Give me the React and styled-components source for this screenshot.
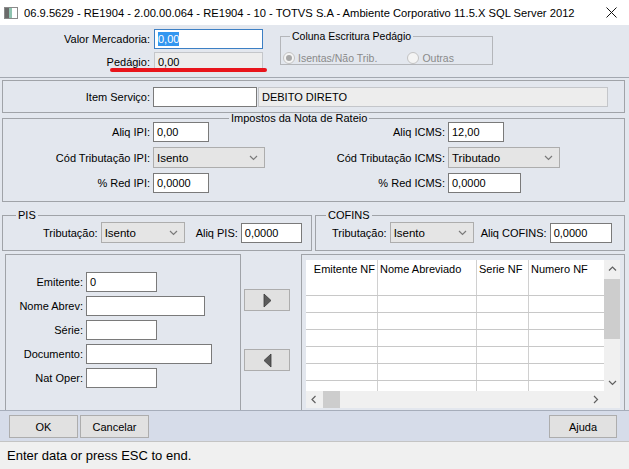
import styled, { createGlobalStyle } from "styled-components";

const GlobalStyle = createGlobalStyle`
  html, body { margin: 0; padding: 0; }
  body {
    width: 629px;
    height: 469px;
    overflow: hidden;
    font-family: "Liberation Sans", Arial, sans-serif;
    font-size: 11px;
    color: #000;
  }
  * { box-sizing: border-box; }
`;

const Window = styled.div`
  width: 629px;
  height: 469px;
  display: flex;
  flex-direction: column;
  background: #e3e7ee;
`;

const TitleBar = styled.div`
  height: 25px;
  flex: none;
  background: #fff;
  display: flex;
  align-items: center;
  gap: 6px;
  padding: 0 12px 0 4px;
  font-size: 11.2px;
`;

const TitleText = styled.div`
  flex: 1;
  white-space: nowrap;
  overflow: hidden;
`;

const TopPanel = styled.div`
  position: relative;
  height: 53px;
  flex: none;
  display: flex;
  align-items: flex-start;
  padding-top: 4px;
  border-bottom: 1px solid #a3a8b0;
`;

const Stack = styled.div`
  display: flex;
  flex-direction: column;
  gap: ${(p) => p.$gap || 3}px;
`;

const Row = styled.div`
  display: flex;
  align-items: center;
  gap: ${(p) => (p.$gap === undefined ? 3 : p.$gap)}px;
  padding-left: ${(p) => p.$pl || 0}px;
  margin-top: ${(p) => p.$mt || 0}px;
`;

const Label = styled.div`
  width: ${(p) => (p.$w ? `${p.$w}px` : "auto")};
  flex: none;
  text-align: right;
  white-space: nowrap;
  margin-left: ${(p) => p.$ml || 0}px;
`;

const Field = styled.div`
  width: ${(p) => p.$w}px;
  height: 20px;
  flex: none;
  display: flex;
  align-items: center;
  padding-left: 3px;
  white-space: nowrap;
  background: ${(p) => (p.$disabled ? "#ededed" : "#fff")};
  border: 1px solid
    ${(p) => (p.$focus ? "#3c7fc4" : p.$disabled ? "#c4c6ca" : "#7a7a7a")};
  margin-left: ${(p) => p.$ml || 0}px;
`;

const Selected = styled.span`
  background: #3296f0;
  color: #fff;
  line-height: 14px;
`;

const RedMark = styled.div`
  position: absolute;
  left: 110px;
  top: 43px;
  width: 157px;
  height: 4px;
  border-radius: 2px;
  background: #e8141b;
`;

const Group = styled.fieldset`
  margin: ${(p) => p.$mt || 0}px 0 0 ${(p) => p.$ml || 0}px;
  padding: ${(p) => p.$pad || "0"};
  border: 1px solid ${(p) => p.$line || "#a0a3a8"};
  width: ${(p) => (p.$w ? `${p.$w}px` : "auto")};
  min-width: 0;
  flex: none;
`;

const Legend = styled.legend`
  margin-left: ${(p) => p.$ml || 0}px;
  padding: 0 2px;
  line-height: ${(p) => p.$lh || 8}px;
  font-size: ${(p) => p.$size || 11}px;
  white-space: nowrap;
`;

const Radio = styled.span`
  width: 12px;
  height: 12px;
  border-radius: 50%;
  border: 1px solid #c3c3c3;
  background: #f4f4f4;
  display: inline-flex;
  align-items: center;
  justify-content: center;
  flex: none;

  &::after {
    content: "";
    width: 6px;
    height: 6px;
    border-radius: 50%;
    background: ${(p) => (p.$checked ? "#a8a8a8" : "transparent")};
  }
`;

const RadioText = styled.span`
  color: #8a8a8a;
  font-size: 10.5px;
  margin-left: 3px;
  margin-right: ${(p) => p.$mr || 0}px;
  white-space: nowrap;
`;

const Content = styled.div`
  flex: 1;
  display: flex;
  flex-direction: column;
  padding: 0 4px 0 2px;
  min-height: 0;
`;

const ItemBox = styled.div`
  margin-top: 2px;
  height: 33px;
  flex: none;
  border: 1px solid #a0a3a8;
  display: flex;
  align-items: center;
  gap: 3px;
`;

const TaxGrid = styled.div`
  display: grid;
  grid-template-columns: 147px 140px 149px 1fr;
  column-gap: 3px;
  row-gap: 5px;
  align-items: center;
  justify-items: start;
  padding: 0 0 8px;

  & > ${Label} {
    justify-self: stretch;
  }
`;

const SelectBox = styled.div`
  width: ${(p) => p.$w}px;
  height: 21px;
  flex: none;
  display: flex;
  align-items: center;
  justify-content: space-between;
  padding: 0 6px 0 3px;
  background: #e5e5e5;
  border: 1px solid #adadad;
  font-size: 11.5px;
`;

const GroupRow = styled.div`
  display: flex;
  gap: 3px;
  margin-top: 9px;
  flex: none;
`;

const Lower = styled.div`
  margin-top: 3px;
  height: 159px;
  flex: none;
  display: flex;
`;

const LeftPanel = styled.div`
  margin-left: 3px;
  width: 236px;
  border: 1px solid #a0a3a8;
  padding-top: 17px;
`;

const Mover = styled.div`
  width: 60px;
  display: flex;
  flex-direction: column;
  padding: 35px 0 0 3px;
  gap: 38px;
`;

const Button = styled.button`
  width: ${(p) => p.$w}px;
  height: ${(p) => p.$h || 23}px;
  margin: 0;
  margin-left: ${(p) => (p.$push ? "auto" : "0")};
  padding: 0;
  display: flex;
  align-items: center;
  justify-content: center;
  background: #e1e1e1;
  border: 1px solid #adadad;
  font-family: "Liberation Sans", Arial, sans-serif;
  font-size: 11px;
  color: #000;
`;

const GridPanel = styled.div`
  flex: 1;
  border: 1px solid #a0a3a8;
  padding: 5px 4px 4px;
  display: flex;
`;

const GridFrame = styled.div`
  flex: 1;
  background: #fff;
  display: grid;
  grid-template-columns: 1fr 16px;
  grid-template-rows: 1fr 17px;
  overflow: hidden;
`;

const Table = styled.div`
  overflow: hidden;
`;

const TableRow = styled.div`
  display: grid;
  grid-template-columns: 72px 99px 52px 1fr;
  height: ${(p) => (p.$head ? 19 : 17)}px;
  border-bottom: ${(p) => (p.$head ? "none" : "1px solid #c8c8c8")};
`;

const Cell = styled.div`
  border-right: 1px solid #d0d0d0;
  padding: ${(p) => (p.$right ? "0 2px 0 0" : "0 0 0 2px")};
  text-align: ${(p) => (p.$right ? "right" : "left")};
  line-height: 19px;
  white-space: nowrap;
  overflow: hidden;

  &:last-child {
    border-right: none;
  }
`;

const VScroll = styled.div`
  background: #f0f0f0;
  display: flex;
  flex-direction: column;
  align-items: center;
`;

const ScrollArrow = styled.div`
  height: 17px;
  width: ${(p) => (p.$narrow ? "16px" : "100%")};
  flex: none;
  display: flex;
  align-items: center;
  justify-content: center;
`;

const VThumb = styled.div`
  margin-top: 2px;
  width: 100%;
  height: 60px;
  background: #cdcdcd;
`;

const Spacer = styled.div`
  flex: 1;
`;

const HScroll = styled.div`
  background: #f0f0f0;
  display: flex;
  align-items: center;
`;

const HThumb = styled.div`
  width: 17px;
  height: 100%;
  margin-left: 1px;
  background: #cdcdcd;
`;

const Corner = styled.div`
  background: #f0f0f0;
`;

const Footer = styled.div`
  height: 31px;
  flex: none;
  display: flex;
  align-items: flex-start;
  gap: 2px;
  padding: 4px 12px 0 9px;
  background: #d6dce9;
  border-top: 1px solid #a6adba;
`;

const StatusBar = styled.div`
  height: 28px;
  flex: none;
  display: flex;
  align-items: center;
  padding-left: 7px;
  background: #f0f0f0;
  border-top: 1px solid #c4c4c4;
  font-size: 13px;
`;

const Chevron = ({ dir = "down", color = "#7a7a7a" }) => {
  const d = {
    down: "M1 1 L4.5 4.5 L8 1",
    up: "M1 4.5 L4.5 1 L8 4.5",
    left: "M4.5 1 L1 4.5 L4.5 8",
    right: "M1 1 L4.5 4.5 L1 8",
  }[dir];
  const vertical = dir === "down" || dir === "up";
  return (
    <svg width={vertical ? 9 : 6} height={vertical ? 6 : 9} viewBox={vertical ? "0 0 9 6" : "0 0 6 9"}>
      <path d={d} fill="none" stroke={color} strokeWidth="1.2" />
    </svg>
  );
};

const Select = ({ w, children }) => (
  <SelectBox $w={w}>
    <span>{children}</span>
    <Chevron />
  </SelectBox>
);

const Triangle = ({ left }) => (
  <svg width="9" height="15" viewBox="0 0 9 15">
    <path
      d={left ? "M8 1 L1 7.5 L8 14 Z" : "M1 1 L8 7.5 L1 14 Z"}
      fill="#5c5c5c"
      stroke="#3a3a3a"
      strokeWidth="0.8"
    />
  </svg>
);

const columns = ["Emitente NF", "Nome Abreviado", "Serie NF", "Numero NF"];

function App() {
  return (
    <Window>
      <GlobalStyle />
      <TitleBar>
        <svg width="14" height="12" viewBox="0 0 14 12">
          <rect x="0.5" y="0.5" width="13" height="11" fill="#fff" stroke="#8a8a8a" />
          <rect x="1" y="1" width="4" height="10" fill="#6a6a6a" />
          <rect x="5" y="1" width="3" height="10" fill="#8fc3b0" />
        </svg>
        <TitleText>
          06.9.5629 - RE1904 - 2.00.00.064 - RE1904 - 10 - TOTVS S.A - Ambiente
          Corporativo 11.5.X SQL Server 2012
        </TitleText>
        <svg width="11" height="11" viewBox="0 0 11 11">
          <path d="M0.5 0.5 L10.5 10.5 M10.5 0.5 L0.5 10.5" stroke="#111" strokeWidth="1" />
        </svg>
      </TitleBar>

      <TopPanel>
        <Stack $gap={3}>
          <Row $gap={4}>
            <Label $w={150}>Valor Mercadoria:</Label>
            <Field $w={109} $focus>
              <Selected>0,00</Selected>
            </Field>
          </Row>
          <Row $gap={4}>
            <Label $w={150}>Pedágio:</Label>
            <Field $w={109} $disabled>
              0,00
            </Field>
          </Row>
        </Stack>
        <Group $ml={17} $w={213} $line="#b4b6ba" $pad="0 0 0 2px">
          <Legend $ml={7} $lh={14} $size={10.5}>
            Coluna Escritura Pedágio
          </Legend>
          <Row $gap={0} $mt={9}>
            <Radio $checked />
            <RadioText $mr={30}>Isentas/Não Trib.</RadioText>
            <Radio />
            <RadioText>Outras</RadioText>
          </Row>
        </Group>
        <RedMark />
      </TopPanel>

      <Content>
        <ItemBox>
          <Label $w={147}>Item Serviço:</Label>
          <Field $w={104} />
          <Field $w={350} $disabled $ml={-2}>
            DEBITO DIRETO
          </Field>
        </ItemBox>

        <Group $mt={1}>
          <Legend $ml={226}>Impostos da Nota de Rateio</Legend>
          <TaxGrid>
            <Label>Aliq IPI:</Label>
            <Field $w={56}>0,00</Field>
            <Label>Aliq ICMS:</Label>
            <Field $w={56}>12,00</Field>

            <Label>Cód Tributação IPI:</Label>
            <Select w={112}>Isento</Select>
            <Label>Cód Tributação ICMS:</Label>
            <Select w={112}>Tributado</Select>

            <Label>% Red IPI:</Label>
            <Field $w={56}>0,0000</Field>
            <Label>% Red ICMS:</Label>
            <Field $w={73}>0,0000</Field>
          </TaxGrid>
        </Group>

        <GroupRow>
          <Group $w={310} $pad="3px 0 7px 0">
            <Legend $ml={13}>PIS</Legend>
            <Row $pl={40}>
              <Label>Tributação:</Label>
              <Select w={84}>Isento</Select>
              <Label $ml={8}>Aliq PIS:</Label>
              <Field $w={61}>0,0000</Field>
            </Row>
          </Group>
          <Group $w={310} $pad="3px 0 7px 0">
            <Legend $ml={10}>COFINS</Legend>
            <Row $pl={16}>
              <Label>Tributação:</Label>
              <Select w={84}>Isento</Select>
              <Label $ml={4}>Aliq COFINS:</Label>
              <Field $w={62}>0,0000</Field>
            </Row>
          </Group>
        </GroupRow>

        <Lower>
          <LeftPanel>
            <Stack $gap={4}>
              <Row>
                <Label $w={77}>Emitente:</Label>
                <Field $w={71}>0</Field>
              </Row>
              <Row>
                <Label $w={77}>Nome Abrev:</Label>
                <Field $w={119} />
              </Row>
              <Row>
                <Label $w={77}>Série:</Label>
                <Field $w={71} />
              </Row>
              <Row>
                <Label $w={77}>Documento:</Label>
                <Field $w={126} />
              </Row>
              <Row>
                <Label $w={77}>Nat Oper:</Label>
                <Field $w={71} />
              </Row>
            </Stack>
          </LeftPanel>

          <Mover>
            <Button $w={46} $h={22}>
              <Triangle />
            </Button>
            <Button $w={46} $h={22}>
              <Triangle left />
            </Button>
          </Mover>

          <GridPanel>
            <GridFrame>
              <Table>
                <TableRow $head>
                  {columns.map((c, i) => (
                    <Cell key={c} $right={i === 0}>
                      {c}
                    </Cell>
                  ))}
                </TableRow>
                {[0, 1, 2, 3, 4, 5, 6].map((r) => (
                  <TableRow key={r}>
                    {columns.map((c) => (
                      <Cell key={c} />
                    ))}
                  </TableRow>
                ))}
              </Table>
              <VScroll>
                <ScrollArrow>
                  <Chevron dir="up" color="#606060" />
                </ScrollArrow>
                <VThumb />
                <Spacer />
                <ScrollArrow>
                  <Chevron dir="down" color="#606060" />
                </ScrollArrow>
              </VScroll>
              <HScroll>
                <ScrollArrow $narrow>
                  <Chevron dir="left" color="#606060" />
                </ScrollArrow>
                <HThumb />
                <Spacer />
                <ScrollArrow $narrow>
                  <Chevron dir="right" color="#606060" />
                </ScrollArrow>
              </HScroll>
              <Corner />
            </GridFrame>
          </GridPanel>
        </Lower>
      </Content>

      <Footer>
        <Button $w={69}>OK</Button>
        <Button $w={69}>Cancelar</Button>
        <Button $w={68} $push>
          Ajuda
        </Button>
      </Footer>

      <StatusBar>Enter data or press ESC to end.</StatusBar>
    </Window>
  );
}

export default App;
